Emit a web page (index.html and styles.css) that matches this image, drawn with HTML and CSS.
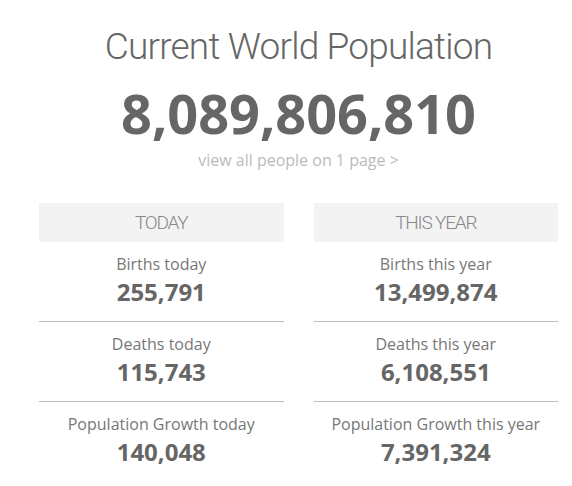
FILE: index.html
```html
<!DOCTYPE html>
<html lang="en">
<head>
  <meta charset="UTF-8">
  <title>Current World Population</title>
  <link rel="stylesheet" href="styles.css">
</head>
<body>
  <div class="page">
    <h1 class="title">Current World Population</h1>
    <div class="counter">8,089,806,810</div>
    <a class="view-all" href="#">view all people on 1 page &gt;</a>

    <div class="stats">
      <div class="column">
        <div class="column-head">TODAY</div>
        <div class="stat">
          <div class="stat-label">Births today</div>
          <div class="stat-value">255,791</div>
        </div>
        <div class="stat">
          <div class="stat-label">Deaths today</div>
          <div class="stat-value">115,743</div>
        </div>
        <div class="stat">
          <div class="stat-label">Population Growth today</div>
          <div class="stat-value">140,048</div>
        </div>
      </div>

      <div class="column">
        <div class="column-head">THIS YEAR</div>
        <div class="stat">
          <div class="stat-label">Births this year</div>
          <div class="stat-value">13,499,874</div>
        </div>
        <div class="stat">
          <div class="stat-label">Deaths this year</div>
          <div class="stat-value">6,108,551</div>
        </div>
        <div class="stat">
          <div class="stat-label">Population Growth this year</div>
          <div class="stat-value">7,391,324</div>
        </div>
      </div>
    </div>
  </div>
</body>
</html>
```

FILE: styles.css
```css
body {
  margin: 0;
  background: #ffffff;
  font-family: "Open Sans", Arial, sans-serif;
  color: #666666;
}
.page {
  width: 519px;
  margin-left: 39px;
  display: flex;
  flex-direction: column;
  align-items: center;
  padding-top: 22px;
}
.title {
  font-family: Roboto, Arial, sans-serif;
  font-weight: 300;
  font-size: 37px;
  letter-spacing: -0.8px;
  line-height: 50px;
  margin: 0;
  color: #666666;
}
.counter {
  font-weight: 700;
  font-size: 54px;
  line-height: 66px;
  margin-top: 8px;
  color: #666666;
}
.view-all {
  font-size: 16px;
  line-height: 20px;
  margin-top: 4px;
  color: #bbbbbb;
  text-decoration: none;
}

/* Two columns of counters */
.stats {
  width: 100%;
  display: grid;
  grid-template-columns: 1fr 1fr;
  gap: 30px;
  margin-top: 33px;
}
.column-head {
  background: #f3f3f3;
  font-family: Roboto, Arial, sans-serif;
  font-weight: 300;
  font-size: 19px;
  letter-spacing: -1.2px;
  line-height: 39px;
  text-align: center;
  color: #888888;
}
.stat {
  text-align: center;
  padding: 11px 0 12px;
  border-bottom: 1px solid #bbbbbb;
}
.stat:last-child {
  border-bottom: none;
}
.stat-label {
  font-size: 16px;
  line-height: 22px;
  color: #777777;
}
.stat-value {
  font-weight: 700;
  font-size: 24px;
  line-height: 34px;
  color: #666666;
}
```
